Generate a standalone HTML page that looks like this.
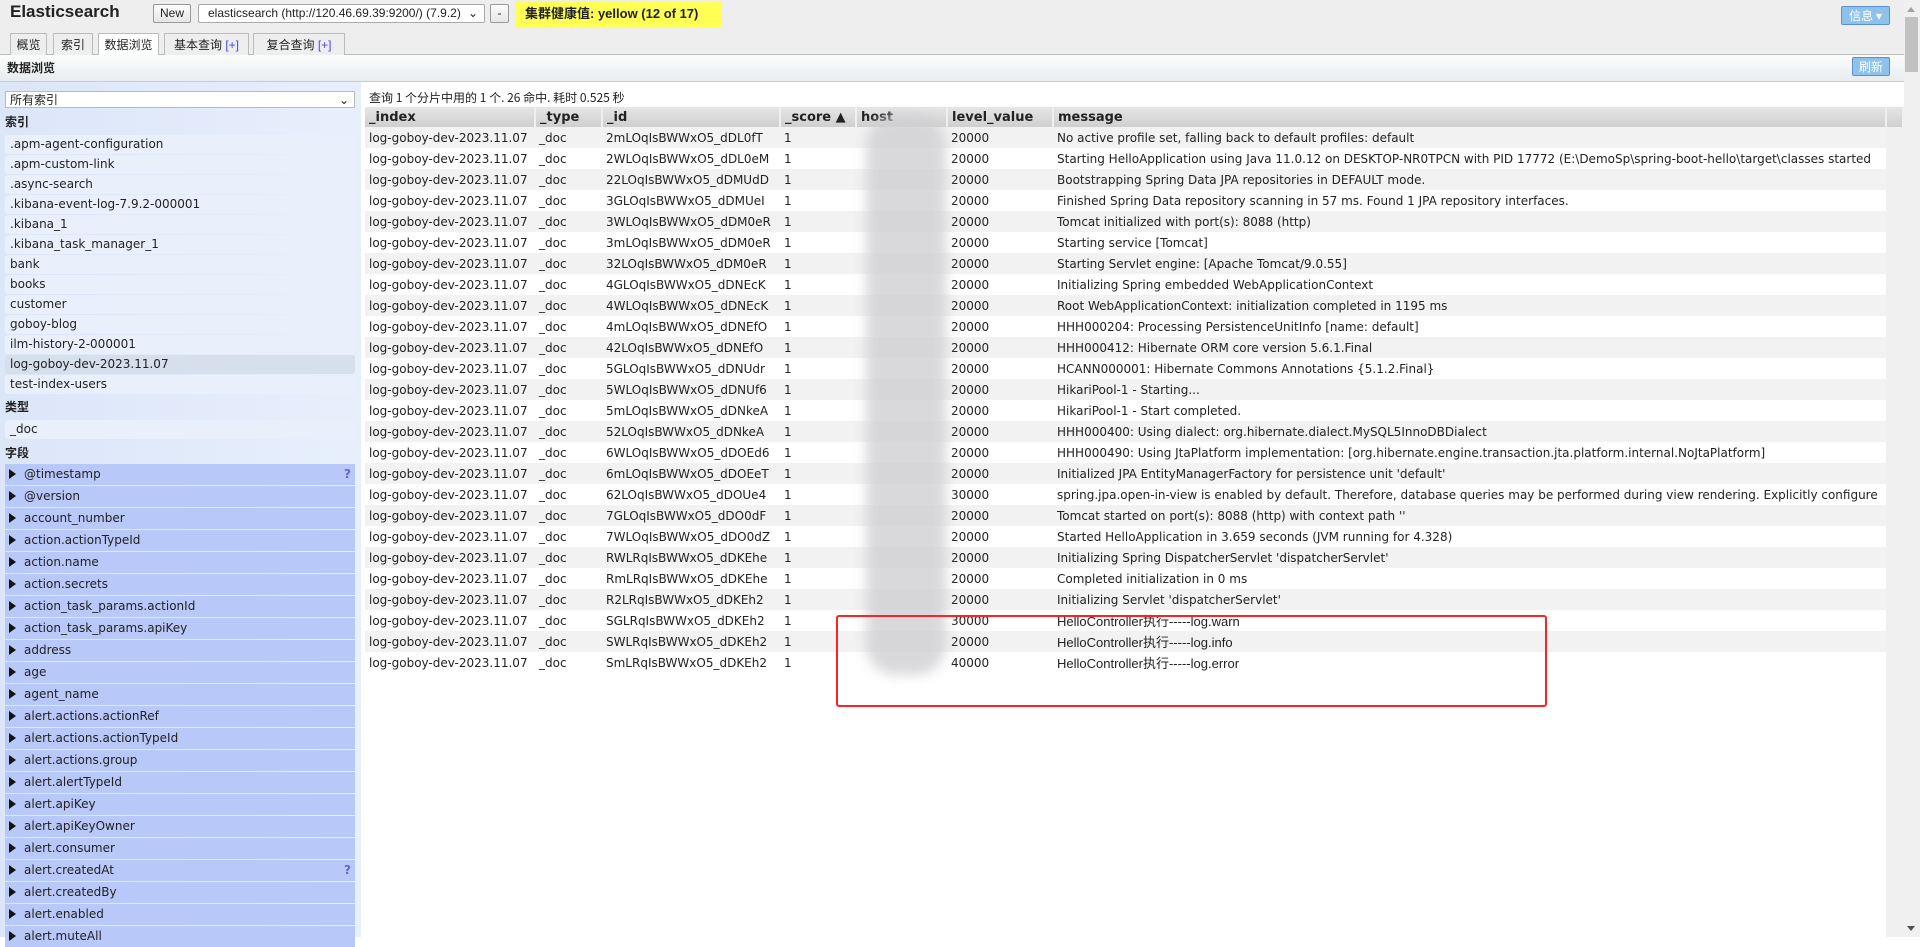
<!DOCTYPE html>
<html><head><meta charset="utf-8"><style>
*{box-sizing:border-box;margin:0;padding:0}
body{width:1920px;height:937px;overflow:hidden;background:#fff;font-family:"DejaVu Sans","Noto Sans CJK SC",sans-serif;font-size:12px;color:#222;position:relative}
.abs{position:absolute}
#top{left:0;top:0;width:1904px;height:55px;background:#eee;border-bottom:1px solid #bbb}
.btn{position:absolute;border:1px solid #999;border-radius:2px;background:linear-gradient(#fdfdfd,#e6e6e6);font-family:"Liberation Sans","Noto Sans CJK SC",sans-serif;font-size:12px;text-align:center;line-height:17px}
.tab{position:absolute;top:33px;height:22px;border:1px solid #bbb;border-bottom:none;background:#eee;font-family:"Liberation Sans","Noto Sans CJK SC",sans-serif;font-size:12px;line-height:22px;text-align:center;white-space:nowrap}
.tab b{font-weight:normal;color:#44f}
#bar2{left:0;top:55px;width:1904px;height:27px;background:linear-gradient(#fbfcfc,#e8ecef);border-bottom:1px solid #ccc}
.bluebtn{position:absolute;background:#8fc2ea;border:1px solid #5b8fd0;border-radius:2px;color:#fff;font-size:12px;text-align:center;line-height:17px;font-family:"Noto Sans CJK SC",sans-serif}
#side{left:0;top:82px;width:361px;height:855px;background:linear-gradient(90deg,#dce6f9,#e8effc)}
.ix{position:absolute;left:5px;width:350px;height:19px;background:#e9f0fc;border-radius:3px;padding-left:5px;line-height:19px;font-size:12px}
.h{position:absolute;left:5px;font-weight:bold;font-family:"Noto Sans CJK SC",sans-serif;font-size:12px}
.fd{position:absolute;left:5px;width:350px;height:21px;background:#b8c8f8;line-height:21px;padding-left:19px;font-size:12px}
.fd:before{content:"";position:absolute;left:4px;top:5px;border-left:7px solid #111;border-top:5.5px solid transparent;border-bottom:5.5px solid transparent}
.fd i{position:absolute;right:4px;font-style:normal;color:#66c;font-weight:bold}
table{position:absolute;left:365px;top:107px;border-collapse:collapse;width:1538px;table-layout:fixed}
th{height:20px;background:linear-gradient(#e6e6e6,#cfcfcf);text-align:left;padding-left:4px;font-size:13px;border-right:2px solid #f0f0f0;white-space:nowrap}
td{height:21px;padding-left:4px;white-space:nowrap;overflow:hidden;font-size:12px}
tr:nth-child(odd) td{background:#f2f2f2}
.cn{font-family:'Liberation Sans','Noto Sans CJK SC',sans-serif;font-size:13px}
</style></head><body>
<div id="top" class="abs"></div>
<div class="abs" style="left:10px;top:2px;font-family:'Liberation Sans',sans-serif;font-weight:bold;font-size:17px">Elasticsearch</div>
<div class="btn" style="left:153px;top:4px;width:38px;height:19px">New</div>
<div class="btn" style="left:198px;top:4px;width:287px;height:19px;background:#fff;border-color:#aaa;text-align:left;padding-left:9px">elasticsearch (http://120.46.69.39:9200/) (7.9.2) <span style="position:absolute;right:6px">⌄</span></div>
<div class="btn" style="left:490px;top:4px;width:19px;height:19px">-</div>
<div class="abs" style="left:515px;top:1px;width:207px;height:26px;background:#ffff55;font-family:'Liberation Sans','Noto Sans CJK SC',sans-serif;font-weight:bold;font-size:13px;line-height:26px;padding-left:10px">集群健康值: yellow (12 of 17)</div>
<div class="tab" style="left:10px;width:37px">概览</div>
<div class="tab" style="left:53px;width:40px">索引</div>
<div class="tab" style="left:98px;width:61px;background:#fff;height:23px">数据浏览</div>
<div class="tab" style="left:164px;width:85px">基本查询 <b>[+]</b></div>
<div class="tab" style="left:253px;width:92px">复合查询 <b>[+]</b></div>
<div class="bluebtn" style="left:1841px;top:6px;width:49px;height:19px">信息 ▾</div>
<div id="bar2" class="abs"></div>
<div class="h" style="top:59px;left:7px">数据浏览</div>
<div class="bluebtn" style="left:1852px;top:57px;width:38px;height:19px">刷新</div>
<div id="side" class="abs"></div>
<div class="abs" style="left:5px;top:91px;width:350px;height:17px;background:#fff;border:1px solid #bbb;font-family:'Noto Sans CJK SC',sans-serif;font-size:12px;line-height:15px;padding-left:4px">所有索引<span style="position:absolute;right:5px">⌄</span></div>
<div class="h" style="top:113px">索引</div>
<div class="ix" style="top:135px">.apm-agent-configuration</div>
<div class="ix" style="top:155px">.apm-custom-link</div>
<div class="ix" style="top:175px">.async-search</div>
<div class="ix" style="top:195px">.kibana-event-log-7.9.2-000001</div>
<div class="ix" style="top:215px">.kibana_1</div>
<div class="ix" style="top:235px">.kibana_task_manager_1</div>
<div class="ix" style="top:255px">bank</div>
<div class="ix" style="top:275px">books</div>
<div class="ix" style="top:295px">customer</div>
<div class="ix" style="top:315px">goboy-blog</div>
<div class="ix" style="top:335px">ilm-history-2-000001</div>
<div class="ix" style="top:355px;background:#d6dfec">log-goboy-dev-2023.11.07</div>
<div class="ix" style="top:375px">test-index-users</div>
<div class="h" style="top:398px">类型</div>
<div class="ix" style="top:420px">_doc</div>
<div class="h" style="top:444px">字段</div>
<div class="fd" style="top:464px">@timestamp<i>?</i></div>
<div class="fd" style="top:486px">@version</div>
<div class="fd" style="top:508px">account_number</div>
<div class="fd" style="top:530px">action.actionTypeId</div>
<div class="fd" style="top:552px">action.name</div>
<div class="fd" style="top:574px">action.secrets</div>
<div class="fd" style="top:596px">action_task_params.actionId</div>
<div class="fd" style="top:618px">action_task_params.apiKey</div>
<div class="fd" style="top:640px">address</div>
<div class="fd" style="top:662px">age</div>
<div class="fd" style="top:684px">agent_name</div>
<div class="fd" style="top:706px">alert.actions.actionRef</div>
<div class="fd" style="top:728px">alert.actions.actionTypeId</div>
<div class="fd" style="top:750px">alert.actions.group</div>
<div class="fd" style="top:772px">alert.alertTypeId</div>
<div class="fd" style="top:794px">alert.apiKey</div>
<div class="fd" style="top:816px">alert.apiKeyOwner</div>
<div class="fd" style="top:838px">alert.consumer</div>
<div class="fd" style="top:860px">alert.createdAt<i>?</i></div>
<div class="fd" style="top:882px">alert.createdBy</div>
<div class="fd" style="top:904px">alert.enabled</div>
<div class="fd" style="top:926px">alert.muteAll</div>
<div class="abs" style="left:369px;top:89px;font-family:'Noto Sans CJK SC',sans-serif;font-size:12px">查询 1 个分片中用的 1 个. 26 命中. 耗时 0.525 秒</div>
<div class="abs" style="left:1886px;top:127px;width:34px;height:810px;background:#f0f0f0"></div>
<table>
<colgroup><col style="width:170px"><col style="width:67px"><col style="width:178px"><col style="width:76px"><col style="width:91px"><col style="width:106px"><col style="width:833px"><col style="width:17px"></colgroup>
<tr><th>_index</th><th>_type</th><th>_id</th><th>_score ▲</th><th>host</th><th>level_value</th><th>message</th><th></th></tr>
</table>
<table style="top:127px;width:1521px">
<colgroup><col style="width:170px"><col style="width:67px"><col style="width:178px"><col style="width:76px"><col style="width:91px"><col style="width:106px"><col style="width:833px"></colgroup>
<tr><td>log-goboy-dev-2023.11.07</td><td>_doc</td><td>2mLOqIsBWWxO5_dDL0fT</td><td>1</td><td></td><td>20000</td><td>No active profile set, falling back to default profiles: default</td></tr>
<tr><td>log-goboy-dev-2023.11.07</td><td>_doc</td><td>2WLOqIsBWWxO5_dDL0eM</td><td>1</td><td></td><td>20000</td><td>Starting HelloApplication using Java 11.0.12 on DESKTOP-NR0TPCN with PID 17772 (E:\DemoSp\spring-boot-hello\target\classes started</td></tr>
<tr><td>log-goboy-dev-2023.11.07</td><td>_doc</td><td>22LOqIsBWWxO5_dDMUdD</td><td>1</td><td></td><td>20000</td><td>Bootstrapping Spring Data JPA repositories in DEFAULT mode.</td></tr>
<tr><td>log-goboy-dev-2023.11.07</td><td>_doc</td><td>3GLOqIsBWWxO5_dDMUeI</td><td>1</td><td></td><td>20000</td><td>Finished Spring Data repository scanning in 57 ms. Found 1 JPA repository interfaces.</td></tr>
<tr><td>log-goboy-dev-2023.11.07</td><td>_doc</td><td>3WLOqIsBWWxO5_dDM0eR</td><td>1</td><td></td><td>20000</td><td>Tomcat initialized with port(s): 8088 (http)</td></tr>
<tr><td>log-goboy-dev-2023.11.07</td><td>_doc</td><td>3mLOqIsBWWxO5_dDM0eR</td><td>1</td><td></td><td>20000</td><td>Starting service [Tomcat]</td></tr>
<tr><td>log-goboy-dev-2023.11.07</td><td>_doc</td><td>32LOqIsBWWxO5_dDM0eR</td><td>1</td><td></td><td>20000</td><td>Starting Servlet engine: [Apache Tomcat/9.0.55]</td></tr>
<tr><td>log-goboy-dev-2023.11.07</td><td>_doc</td><td>4GLOqIsBWWxO5_dDNEcK</td><td>1</td><td></td><td>20000</td><td>Initializing Spring embedded WebApplicationContext</td></tr>
<tr><td>log-goboy-dev-2023.11.07</td><td>_doc</td><td>4WLOqIsBWWxO5_dDNEcK</td><td>1</td><td></td><td>20000</td><td>Root WebApplicationContext: initialization completed in 1195 ms</td></tr>
<tr><td>log-goboy-dev-2023.11.07</td><td>_doc</td><td>4mLOqIsBWWxO5_dDNEfO</td><td>1</td><td></td><td>20000</td><td>HHH000204: Processing PersistenceUnitInfo [name: default]</td></tr>
<tr><td>log-goboy-dev-2023.11.07</td><td>_doc</td><td>42LOqIsBWWxO5_dDNEfO</td><td>1</td><td></td><td>20000</td><td>HHH000412: Hibernate ORM core version 5.6.1.Final</td></tr>
<tr><td>log-goboy-dev-2023.11.07</td><td>_doc</td><td>5GLOqIsBWWxO5_dDNUdr</td><td>1</td><td></td><td>20000</td><td>HCANN000001: Hibernate Commons Annotations {5.1.2.Final}</td></tr>
<tr><td>log-goboy-dev-2023.11.07</td><td>_doc</td><td>5WLOqIsBWWxO5_dDNUf6</td><td>1</td><td></td><td>20000</td><td>HikariPool-1 - Starting...</td></tr>
<tr><td>log-goboy-dev-2023.11.07</td><td>_doc</td><td>5mLOqIsBWWxO5_dDNkeA</td><td>1</td><td></td><td>20000</td><td>HikariPool-1 - Start completed.</td></tr>
<tr><td>log-goboy-dev-2023.11.07</td><td>_doc</td><td>52LOqIsBWWxO5_dDNkeA</td><td>1</td><td></td><td>20000</td><td>HHH000400: Using dialect: org.hibernate.dialect.MySQL5InnoDBDialect</td></tr>
<tr><td>log-goboy-dev-2023.11.07</td><td>_doc</td><td>6WLOqIsBWWxO5_dDOEd6</td><td>1</td><td></td><td>20000</td><td>HHH000490: Using JtaPlatform implementation: [org.hibernate.engine.transaction.jta.platform.internal.NoJtaPlatform]</td></tr>
<tr><td>log-goboy-dev-2023.11.07</td><td>_doc</td><td>6mLOqIsBWWxO5_dDOEeT</td><td>1</td><td></td><td>20000</td><td>Initialized JPA EntityManagerFactory for persistence unit 'default'</td></tr>
<tr><td>log-goboy-dev-2023.11.07</td><td>_doc</td><td>62LOqIsBWWxO5_dDOUe4</td><td>1</td><td></td><td>30000</td><td>spring.jpa.open-in-view is enabled by default. Therefore, database queries may be performed during view rendering. Explicitly configure</td></tr>
<tr><td>log-goboy-dev-2023.11.07</td><td>_doc</td><td>7GLOqIsBWWxO5_dDO0dF</td><td>1</td><td></td><td>20000</td><td>Tomcat started on port(s): 8088 (http) with context path ''</td></tr>
<tr><td>log-goboy-dev-2023.11.07</td><td>_doc</td><td>7WLOqIsBWWxO5_dDO0dZ</td><td>1</td><td></td><td>20000</td><td>Started HelloApplication in 3.659 seconds (JVM running for 4.328)</td></tr>
<tr><td>log-goboy-dev-2023.11.07</td><td>_doc</td><td>RWLRqIsBWWxO5_dDKEhe</td><td>1</td><td></td><td>20000</td><td>Initializing Spring DispatcherServlet 'dispatcherServlet'</td></tr>
<tr><td>log-goboy-dev-2023.11.07</td><td>_doc</td><td>RmLRqIsBWWxO5_dDKEhe</td><td>1</td><td></td><td>20000</td><td>Completed initialization in 0 ms</td></tr>
<tr><td>log-goboy-dev-2023.11.07</td><td>_doc</td><td>R2LRqIsBWWxO5_dDKEh2</td><td>1</td><td></td><td>20000</td><td>Initializing Servlet 'dispatcherServlet'</td></tr>
<tr><td>log-goboy-dev-2023.11.07</td><td>_doc</td><td>SGLRqIsBWWxO5_dDKEh2</td><td>1</td><td></td><td>30000</td><td class="cn">HelloController执行-----log.warn</td></tr>
<tr><td>log-goboy-dev-2023.11.07</td><td>_doc</td><td>SWLRqIsBWWxO5_dDKEh2</td><td>1</td><td></td><td>20000</td><td class="cn">HelloController执行-----log.info</td></tr>
<tr><td>log-goboy-dev-2023.11.07</td><td>_doc</td><td>SmLRqIsBWWxO5_dDKEh2</td><td>1</td><td></td><td>40000</td><td class="cn">HelloController执行-----log.error</td></tr>
</table>
<div class="abs" style="left:866px;top:115px;width:80px;height:560px;background:#d0d0d3;filter:blur(6px);opacity:.8;border-radius:30px"></div>
<div class="abs" style="left:836px;top:615px;width:711px;height:92px;border:2px solid #f22;border-radius:3px"></div>
<div class="abs" style="left:1904px;top:0;width:16px;height:937px;background:#f0f0f0"></div>
<div class="abs" style="left:1905px;top:17px;width:13px;height:55px;background:#c1c1c1"></div>
<div class="abs" style="left:1907px;top:7px;border-bottom:5px solid #a3a3a3;border-left:4px solid transparent;border-right:4px solid transparent"></div>
<div class="abs" style="left:1907px;top:926px;border-top:5px solid #505050;border-left:4px solid transparent;border-right:4px solid transparent"></div>
</body></html>
